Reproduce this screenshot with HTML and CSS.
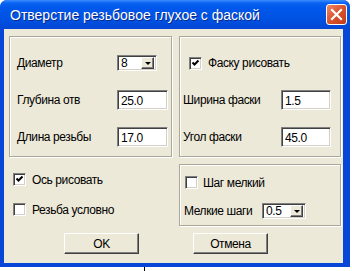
FILE: index.html
```html
<!DOCTYPE html>
<html lang="ru">
<head>
    <meta charset="UTF-8">
    <title>Отверстие резьбовое глухое с фаской</title>
    <link rel="stylesheet" href="styles.css">
</head>
<body>
    <div class="window">
        <div class="titlebar">
            <span class="title">Отверстие резьбовое глухое с фаской</span>
            <span class="close">
                <svg width="21" height="21" viewBox="0 0 21 21">
                    <path d="M6 6 L15 15 M15 6 L6 15" stroke="#fff" stroke-width="2.2" stroke-linecap="square"/>
                </svg>
            </span>
        </div>
        <div class="client">
            <div class="panels">
                <div class="group group-left">
                    <div class="form-grid">
                        <span>Диаметр</span>
                        <div class="combo combo-d"><span class="value">8</span><span class="drop"></span></div>
                        <span>Глубина отв</span>
                        <div class="field">25.0</div>
                        <span>Длина резьбы</span>
                        <div class="field">17.0</div>
                    </div>
                </div>
                <div class="group group-right">
                    <div class="form-grid">
                        <div class="check-row span-2"><span class="check checked"></span><span>Фаску рисовать</span></div>
                        <span>Ширина фаски</span>
                        <div class="field field-sm">1.5</div>
                        <span>Угол фаски</span>
                        <div class="field field-sm">45.0</div>
                    </div>
                </div>
                <div class="plain-checks">
                    <div class="check-row"><span class="check checked"></span><span>Ось рисовать</span></div>
                    <div class="check-row"><span class="check"></span><span>Резьба условно</span></div>
                </div>
                <div class="group group-step">
                    <div class="check-row"><span class="check"></span><span>Шаг мелкий</span></div>
                    <div class="step-row">
                        <span>Мелкие шаги</span>
                        <div class="combo combo-s"><span class="value">0.5</span><span class="drop"></span></div>
                    </div>
                </div>
            </div>
            <div class="buttons">
                <div class="btn">OK</div>
                <div class="btn">Отмена</div>
            </div>
        </div>
    </div>
    <div class="caret"></div>
</body>
</html>
```

FILE: styles.css
```css
body {
    margin: 0;
    background-color: #fff;
    font-family: "Liberation Sans", Arial, sans-serif;
    font-size: 12px;
    letter-spacing: -0.4px;
    color: #000;
}
.window {
    width: 350px;
    height: 267px;
    background-color: #0846d8;
    border-radius: 7px 7px 0 0;
    display: flex;
    flex-direction: column;
}
.titlebar {
    height: 29px;
    display: flex;
    align-items: center;
    justify-content: space-between;
    padding: 0 3px 0 10px;
    border-radius: 7px 7px 0 0;
    background: linear-gradient(#3b8eff 0, #0a63f2 3px, #0058ea 8px, #0053e4 18px, #0349d8 26px, #0846d4 29px);
}
.title {
    color: #fff;
    font-size: 14px;
    letter-spacing: 0;
    text-shadow: 1px 1px #0a2a8a;
}
.close {
    width: 21px;
    height: 21px;
    box-sizing: border-box;
    border: 1px solid #fff;
    border-radius: 3px;
    background: linear-gradient(135deg, #ee8a66, #d9532d 50%, #c03c18);
    display: flex;
    align-items: center;
    justify-content: center;
}
.close svg {
    display: block;
    margin: -1px;
}
.client {
    flex: 1;
    margin: 0 7px 4px 4px;
    padding: 7px 0 0 5px;
    background-color: #ece9d8;
}
.panels {
    display: grid;
    grid-template-columns: 163px 162px;
    column-gap: 7px;
    row-gap: 7px;
}
.group {
    box-sizing: border-box;
    border: 1px solid #aca899;
    box-shadow: inset 1px 1px #fff, 1px 1px #fff;
}
.group-left {
    padding: 16px 0 9px 7px;
}
.group-right {
    padding: 16px 0 9px 3px;
}
.form-grid {
    display: grid;
    grid-template-columns: 100px auto;
    grid-auto-rows: 20px;
    row-gap: 17px;
    align-items: center;
    justify-items: start;
}
.group-right .form-grid {
    grid-template-columns: 98px auto;
}
.span-2 {
    grid-column: span 2;
}
.group-right .check-row {
    margin-left: 6px;
}
.field {
    box-sizing: border-box;
    width: 51px;
    height: 20px;
    padding: 3px 0 0 3px;
    background-color: #fff;
    border: 1px solid;
    border-color: #808080 #fff #fff #808080;
    box-shadow: inset 1px 1px #404040, inset -1px -1px #d4d0c8;
}
.field-sm {
    width: 50px;
}
.combo {
    box-sizing: border-box;
    height: 16px;
    display: flex;
    align-items: center;
    justify-content: space-between;
    background-color: #fff;
    border: 1px solid;
    border-color: #808080 #fff #fff #808080;
    box-shadow: inset 1px 1px #404040, inset -1px -1px #d4d0c8;
    padding: 1px 2px 2px 2px;
}
.combo-d {
    width: 40px;
}
.combo-s {
    width: 44px;
}
.combo .value {
    padding-left: 1px;
}
.drop {
    box-sizing: border-box;
    width: 13px;
    height: 12px;
    background-color: #ece9d8;
    border: 1px solid;
    border-color: #fff #404040 #404040 #fff;
    box-shadow: inset -1px -1px #808080;
    display: flex;
    align-items: center;
    justify-content: center;
}
.drop::after {
    content: "";
    border-left: 3px solid transparent;
    border-right: 3px solid transparent;
    border-top: 3px solid #000;
    margin-top: 1px;
}
.check-row {
    display: flex;
    align-items: center;
    gap: 6px;
    height: 13px;
}
.check {
    box-sizing: border-box;
    width: 13px;
    height: 13px;
    background-color: #fff;
    border: 1px solid;
    border-color: #808080 #fff #fff #808080;
    box-shadow: inset 1px 1px #404040, inset -1px -1px #d4d0c8;
}
.check.checked {
    background: #fff url("data:image/svg+xml;utf8,<svg xmlns='http://www.w3.org/2000/svg' width='11' height='11'><path d='M2.5 4.5 L4.5 6.5 L8.5 2.5' fill='none' stroke='black' stroke-width='2'/></svg>") no-repeat 0 0;
}
.plain-checks {
    display: flex;
    flex-direction: column;
    gap: 17px;
    padding: 9px 0 0 4px;
}
.group-step {
    padding: 11px 0 6px 4px;
    display: flex;
    flex-direction: column;
    gap: 14px;
}
.group-step .check-row {
    margin-left: 1px;
    gap: 5px;
}
.step-row {
    display: grid;
    grid-template-columns: 78px auto;
    align-items: center;
    height: 16px;
}
.buttons {
    display: flex;
    gap: 54px;
    margin: 7px 0 0 55px;
}
.btn {
    box-sizing: border-box;
    width: 75px;
    height: 21px;
    display: flex;
    align-items: center;
    justify-content: center;
    background-color: #ece9d8;
    border: 1px solid;
    border-color: #fff #404040 #404040 #fff;
    box-shadow: inset -1px -1px #808080;
}
.caret {
    width: 1px;
    height: 4px;
    margin: 0 0 0 144px;
    background-color: #000;
}
```
